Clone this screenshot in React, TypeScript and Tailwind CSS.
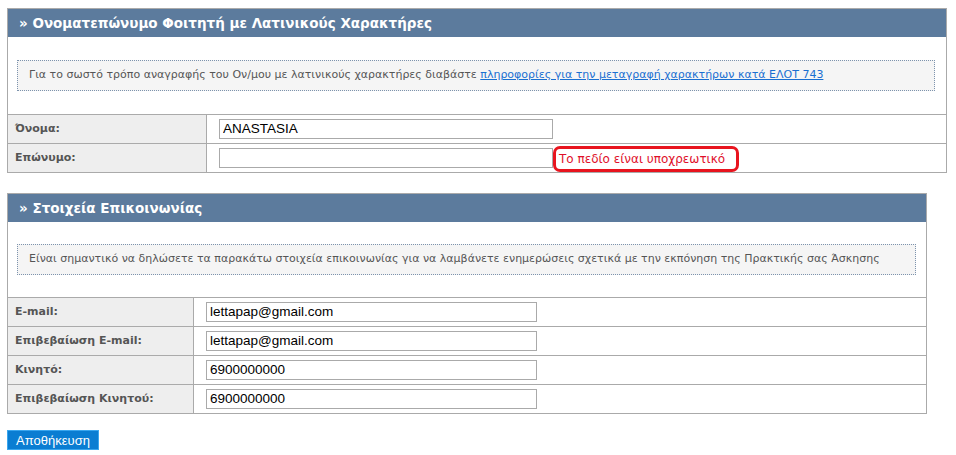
import React from 'react';

const verdana = { fontFamily: '"DejaVu Sans", Verdana, sans-serif' };

function Header({ title }: { title: string }) {
  return (
    <div className="h-[28px] bg-[#5c7b9d] text-white font-bold text-[13.5px] leading-[28px] pl-[11px] font-['DejaVu_Sans',sans-serif]">
      » {title}
    </div>
  );
}

function Info({ children, width }: { children: React.ReactNode; width: string }) {
  return (
    <div className={`ml-[9px] ${width} h-[31px] border border-dotted border-[#7d93ad] bg-[#f5f5f5] flex items-center pl-[11px] text-[11px] text-[#555] font-['DejaVu_Sans',sans-serif]`}>
      {children}
    </div>
  );
}

interface RowProps {
  label: string;
  value: string;
  labelW: string;
  inputW: string;
  children?: React.ReactNode;
}

function Row({ label, value, labelW, inputW, children }: RowProps) {
  return (
    <div className="flex h-[29px] border-t border-[#aaa]">
      <div className={`${labelW} shrink-0 bg-[#eee] border-r border-[#aaa] flex items-center pl-[7px] pt-[1px] text-[11px] font-bold text-[#555] font-['DejaVu_Sans',sans-serif]`}>
        {label}
      </div>
      <div className="flex items-center pl-[12px]">
        <input
          defaultValue={value}
          className={`${inputW} h-[20px] border border-[#aaa] px-[3px] text-[13.5px] text-black bg-white outline-none font-['Liberation_Sans',Arial,sans-serif]`}
        />
        {children}
      </div>
    </div>
  );
}

export default function App() {
  return (
    <div className="pt-[8px] pl-[7px] bg-white min-h-[455px] font-['DejaVu_Sans',sans-serif]" style={verdana}>
      {/* Latin name panel */}
      <div className="w-[940px] border border-[#aaa]">
        <Header title="Ονοματεπώνυμο Φοιτητή με Λατινικούς Χαρακτήρες" />
        <div className="pt-[23px] pb-[23px]">
          <Info width="w-[918px]">
            <span>
              Για το σωστό τρόπο αναγραφής του Ον/μου με λατινικούς χαρακτήρες διαβάστε{' '}
              <a href="#" className="text-[#1a6fd1] underline">
                πληροφορίες για την μεταγραφή χαρακτήρων κατά ΕΛΟΤ 743
              </a>
            </span>
          </Info>
        </div>
        <Row label="Όνομα:" value="ANASTASIA" labelW="w-[199px]" inputW="w-[334px]" />
        <Row label="Επώνυμο:" value="" labelW="w-[199px]" inputW="w-[334px]">
          <span className="h-[26px] mt-[2px] pl-[3px] pr-[11px] border-[3px] border-[#e8141e] rounded-[7px] flex items-center text-[12px] text-[#e0102a] font-['DejaVu_Sans',sans-serif]">
            Το πεδίο είναι υποχρεωτικό
          </span>
        </Row>
      </div>

      {/* Contact panel */}
      <div className="w-[920px] border border-[#aaa] mt-[20px]">
        <Header title="Στοιχεία Επικοινωνίας" />
        <div className="pt-[22px] pb-[22px]">
          <Info width="w-[899px]">
            Είναι σημαντικό να δηλώσετε τα παρακάτω στοιχεία επικοινωνίας για να λαμβάνετε ενημερώσεις σχετικά με την εκπόνηση της Πρακτικής σας Άσκησης
          </Info>
        </div>
        <Row label="E-mail:" value="lettapap@gmail.com" labelW="w-[186px]" inputW="w-[331px]" />
        <Row label="Επιβεβαίωση E-mail:" value="lettapap@gmail.com" labelW="w-[186px]" inputW="w-[331px]" />
        <Row label="Κινητό:" value="6900000000" labelW="w-[186px]" inputW="w-[331px]" />
        <Row label="Επιβεβαίωση Κινητού:" value="6900000000" labelW="w-[186px]" inputW="w-[331px]" />
      </div>

      <button className="mt-[16px] w-[92px] h-[20px] bg-[#0a7dd2] border border-[#3aa6ee] text-white text-[13px] leading-none font-['Liberation_Sans',Arial,sans-serif]">
        Αποθήκευση
      </button>
    </div>
  );
}
